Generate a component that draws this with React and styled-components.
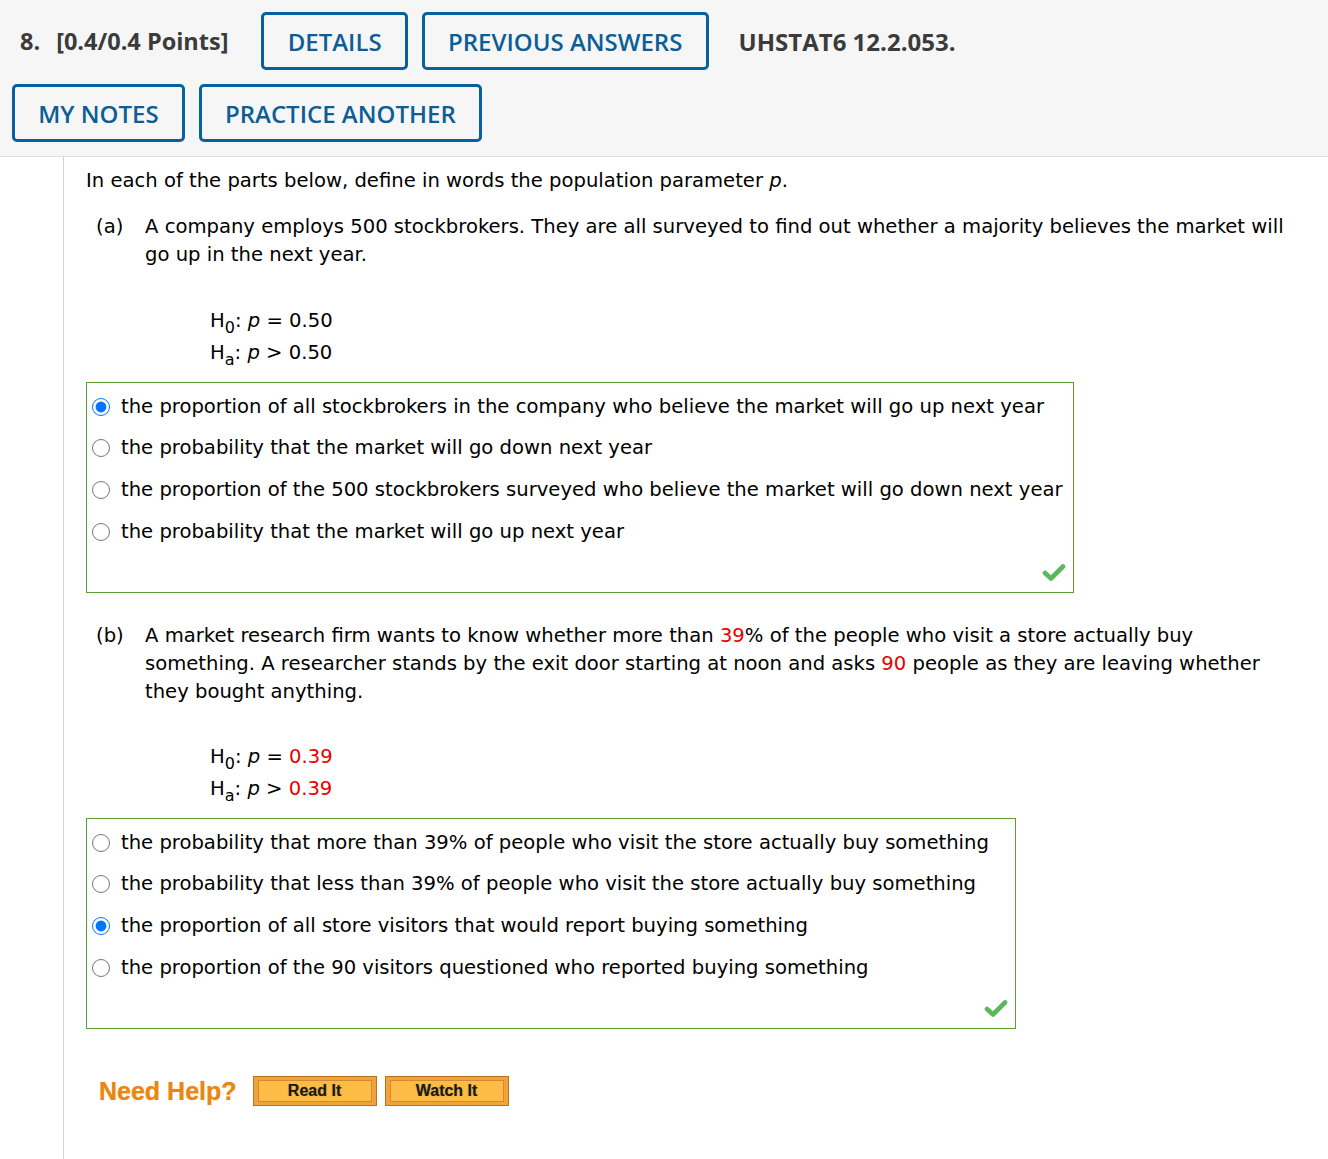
import React from 'react'
import styled, { createGlobalStyle } from 'styled-components'

const Global = createGlobalStyle`
	body {
		margin: 0;
		background: #fff;
		font-family: "DejaVu Sans", Verdana, sans-serif;
		color: #000;
	}
`

const Header = styled.header`
	background: #f6f6f6;
	border-bottom: 1px solid #dedede;
	height: 157px;
	box-sizing: border-box;
	padding: 12px 12px 0;
	font-family: "Open Sans", sans-serif;
`

const HeaderRow = styled.div`
	display: flex;
	align-items: center;
	gap: 14px;
	margin-bottom: 14px;
`

const Number = styled.span`
	font-weight: 700;
	font-size: 23.5px;
	color: #3b3b3b;
	margin: 0 2px 0 8px;
`

const Points = styled.span`
	font-weight: 700;
	font-size: 23.5px;
	color: #3b3b3b;
	margin-right: 19px;
`

const Code = styled.span`
	font-weight: 700;
	font-size: 24px;
	color: #3b3b3b;
	margin-left: 16px;
`

const OutlineButton = styled.button`
	height: 58px;
	box-sizing: border-box;
	padding: 0 23.2px;
	border: 3px solid #08619c;
	border-radius: 5px;
	background: transparent;
	color: #0c5e96;
	font-family: "Open Sans", sans-serif;
	font-weight: 600;
	font-size: 24px;
`

const Body = styled.div`
	display: flex;
	min-height: 1002px;
`

const Gutter = styled.div`
	width: 63px;
	border-right: 1px solid #d2d2d2;
	flex-shrink: 0;
`

const Content = styled.main`
	padding: 10px 0 0 22px;
	font-size: 19.6px;
	line-height: 28px;
	flex: 1;
`

const Intro = styled.p`
	margin: 0 0 18px;
`

const Part = styled.div`
	display: flex;
	padding-left: 10px;
	margin-bottom: ${p => p.$mb}px;
`

const PartLabel = styled.span`
	width: 49px;
	flex-shrink: 0;
`

const PartText = styled.p`
	margin: 0;
	padding-right: 24px;
`

const Red = styled.span`
	color: #e80000;
`

const Hypotheses = styled.div`
	padding-left: 124px;
	line-height: 32px;
	margin-bottom: 13px;
`

const Sub = styled.sub`
	font-size: 16px;
	vertical-align: -6px;
	line-height: 0;
`

const Answers = styled.div`
	width: ${p => p.$w}px;
	height: 211px;
	box-sizing: border-box;
	border: 1px solid #5d9f2f;
	padding: 3px 0 0 4px;
	position: relative;
	margin-bottom: ${p => p.$mb || 0}px;
`

const Option = styled.label`
	display: flex;
	align-items: center;
	gap: 11px;
	height: 41.6px;
	white-space: nowrap;
`

const Radio = styled.input`
	width: 18px;
	height: 18px;
	margin: 0 0 0 1px;
	accent-color: #0075ff;
`

const Check = styled.svg`
	position: absolute;
	right: 7px;
	bottom: 10px;
`

const Help = styled.div`
	display: flex;
	align-items: center;
	margin: 47px 0 0 13px;
	font-family: "Liberation Sans", Arial, sans-serif;
`

const HelpTitle = styled.span`
	color: #ec8612;
	font-weight: 700;
	font-size: 25px;
	margin-right: 16px;
	text-shadow: 0 0 1px rgba(236, 134, 18, 0.6);
`

const HelpButton = styled.span`
	display: inline-flex;
	width: 124px;
	height: 30px;
	box-sizing: border-box;
	margin-right: 8px;
	border: 1px solid #b8731f;
	background: #f2a23a;
	padding: 3px 4px;
	& > span {
		flex: 1;
		display: flex;
		align-items: center;
		justify-content: center;
		background: #fcbc45;
		border: 1px solid #d08a36;
		font-weight: 700;
		font-size: 16px;
		color: #1a1a1a;
		text-shadow: 0 0 1px rgba(0, 0, 0, 0.4);
	}
`

const CheckMark = () => (
	<Check width="24" height="19" viewBox="0 0 24 19">
		<path d="M3 10 L9 15.5 L21 3.5" fill="none" stroke="#5cb85c" strokeWidth="4.6" strokeLinecap="round" strokeLinejoin="round" />
	</Check>
)

const Choices = ({ name, items, selected, width, mb }) => (
	<Answers $w={width} $mb={mb}>
		{items.map((text, i) => (
			<Option key={i}>
				<Radio type="radio" name={name} defaultChecked={i === selected} />
				{text}
			</Option>
		))}
		<CheckMark />
	</Answers>
)

const App = () => (
	<>
		<Global />
		<Header>
			<HeaderRow>
				<Number>8.</Number>
				<Points>[0.4/0.4 Points]</Points>
				<OutlineButton>DETAILS</OutlineButton>
				<OutlineButton>PREVIOUS ANSWERS</OutlineButton>
				<Code>UHSTAT6 12.2.053.</Code>
			</HeaderRow>
			<HeaderRow>
				<OutlineButton>MY NOTES</OutlineButton>
				<OutlineButton>PRACTICE ANOTHER</OutlineButton>
			</HeaderRow>
		</Header>
		<Body>
			<Gutter />
			<Content>
				<Intro>In each of the parts below, define in words the population parameter <i>p</i>.</Intro>
				<Part $mb={36}>
					<PartLabel>(a)</PartLabel>
					<PartText>A company employs 500 stockbrokers. They are all surveyed to find out whether a majority believes the market will go up in the next year.</PartText>
				</Part>
				<Hypotheses>
					<div>H<Sub>0</Sub>: <i>p</i> = 0.50</div>
					<div>H<Sub>a</Sub>: <i>p</i> &gt; 0.50</div>
				</Hypotheses>
				<Choices
					name="a"
					width={988}
					mb={29}
					selected={0}
					items={[
						'the proportion of all stockbrokers in the company who believe the market will go up next year',
						'the probability that the market will go down next year',
						'the proportion of the 500 stockbrokers surveyed who believe the market will go down next year',
						'the probability that the market will go up next year',
					]}
				/>
				<Part $mb={35}>
					<PartLabel>(b)</PartLabel>
					<PartText>
						A market research firm wants to know whether more than <Red>39</Red>% of the people who visit a store actually buy something. A researcher stands by the exit door starting at noon and asks <Red>90</Red> people as they are leaving whether they bought anything.
					</PartText>
				</Part>
				<Hypotheses>
					<div>H<Sub>0</Sub>: <i>p</i> = <Red>0.39</Red></div>
					<div>H<Sub>a</Sub>: <i>p</i> &gt; <Red>0.39</Red></div>
				</Hypotheses>
				<Choices
					name="b"
					width={930}
					selected={2}
					items={[
						'the probability that more than 39% of people who visit the store actually buy something',
						'the probability that less than 39% of people who visit the store actually buy something',
						'the proportion of all store visitors that would report buying something',
						'the proportion of the 90 visitors questioned who reported buying something',
					]}
				/>
				<Help>
					<HelpTitle>Need Help?</HelpTitle>
					<HelpButton><span>Read It</span></HelpButton>
					<HelpButton><span>Watch It</span></HelpButton>
				</Help>
			</Content>
		</Body>
	</>
)

export default App
